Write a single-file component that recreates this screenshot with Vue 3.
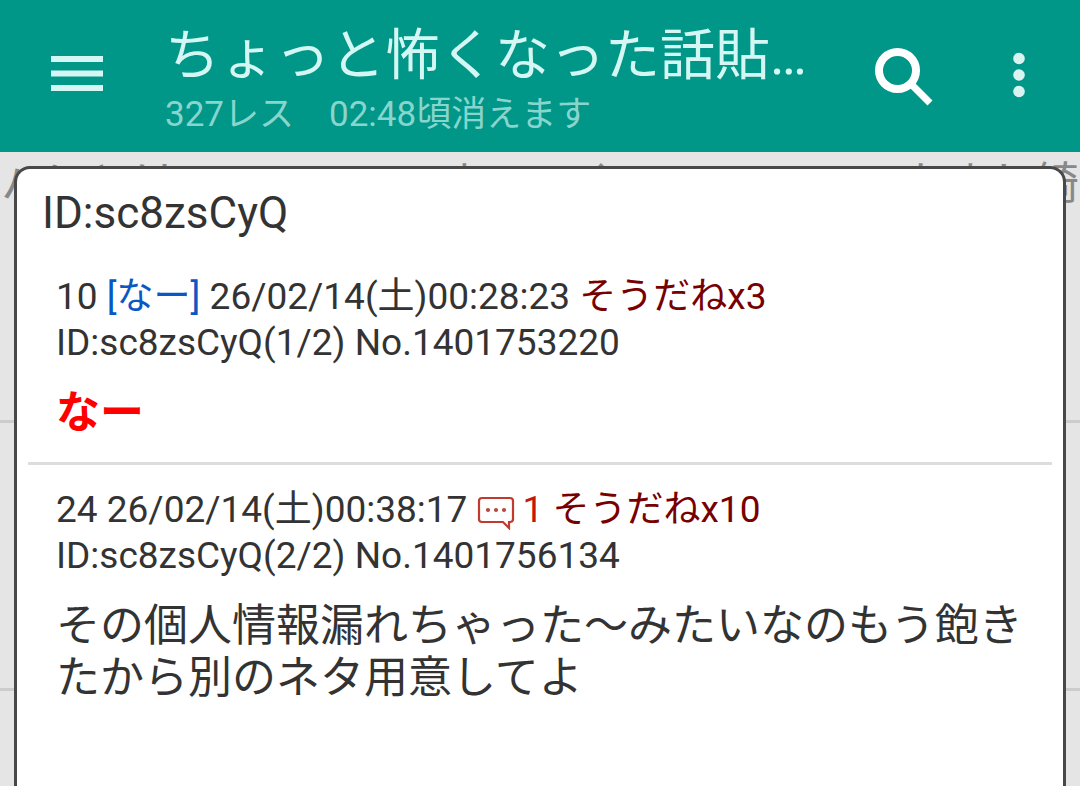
<script setup>
const posts = [
  {
    no: 10, subject: '[なー]', date: '26/02/14(土)00:28:23', replies: 0, agree: 'そうだねx3',
    info: 'ID:sc8zsCyQ(1/2) No.1401753220', body: 'なー', strong: true,
  },
  {
    no: 24, subject: '', date: '26/02/14(土)00:38:17', replies: 1, agree: 'そうだねx10',
    info: 'ID:sc8zsCyQ(2/2) No.1401756134', body: 'その個人情報漏れちゃった～みたいなのもう飽きたから別のネタ用意してよ', strong: false,
  },
]
</script>

<template>
  <div class="app">
    <header class="bar">
      <button class="icon-btn menu" type="button" aria-label="メニュー">
        <svg width="52" height="36" viewBox="0 0 52 36"><path d="M0 0h52v6H0zM0 14.500h52v6H0zM0 29h52v6H0z" fill="#d5f7f3" /></svg>
      </button>
      <div class="titles">
        <h1>ちょっと怖くなった話貼…</h1>
        <p>327レス　02:48頃消えます</p>
      </div>
      <button class="icon-btn search" type="button" aria-label="検索">
        <svg width="60" height="60" viewBox="0 0 60 60" fill="none" stroke="#fff">
          <circle cx="23.500" cy="23.500" r="18.500" stroke-width="8" />
          <path d="M36 36L56 56" stroke-width="7" />
        </svg>
      </button>
      <button class="icon-btn more" type="button" aria-label="その他">
        <svg width="12" height="46" viewBox="0 0 12 46" fill="#d9f3f0">
          <circle cx="6" cy="6.500" r="5.800" /><circle cx="6" cy="23" r="5.800" /><circle cx="6" cy="39.500" r="5.800" />
        </svg>
      </button>
    </header>

    <main class="thread">
      <div class="row first"><span>ハにとけ　　　　　　ま　　く</span><span>なまし綺</span></div>
      <div class="row"></div>
      <div class="row"></div>

      <section class="popup" aria-labelledby="popup-title">
        <h2 id="popup-title">ID:sc8zsCyQ</h2>
        <article v-for="post in posts" :key="post.no" class="post">
          <div class="meta">
            {{ post.no }}
            <a v-if="post.subject" href="#" class="subject">{{ post.subject }}</a>
            {{ post.date + ' ' }}
            <a v-if="post.replies" href="#" class="replies"><svg width="38" height="34" viewBox="0 0 38 34" fill="none" stroke="#c03a30" stroke-width="2.200">
              <path d="M5 2h28q3 0 3 3v18q0 3-3 3h-1v6l-6-6H5q-3 0-3-3V5q0-3 3-3z" />
              <g fill="#b84840" stroke="none"><circle cx="11" cy="14" r="2.100" /><circle cx="19" cy="14" r="2.100" /><circle cx="27" cy="14" r="2.100" /></g>
            </svg><span>{{ post.replies + ' ' }}</span></a>
            <a href="#" class="agree">{{ post.agree }}</a>
            <div>{{ post.info }}</div>
          </div>
          <p class="body" :class="{ strong: post.strong }">{{ post.body }}</p>
        </article>
      </section>
    </main>
  </div>
</template>

<style>
body {
  margin: 0;
  background: #e5e5e5;
}
</style>

<style scoped>
.app {
  display: flex;
  flex-direction: column;
  height: 100vh;
  overflow: hidden;
  font-family: Roboto, "Noto Sans CJK JP", sans-serif;
  color: #333;
}
h1, h2, p {
  margin: 0;
  font-weight: 400;
}
a {
  text-decoration: none;
}
.bar {
  display: flex;
  flex: none;
  align-items: center;
  height: 152px;
  background: #009688;
}
.icon-btn {
  box-sizing: border-box;
  flex: none;
  display: flex;
  align-items: center;
  justify-content: center;
  height: 148px;
  padding: 0;
  border: 0;
  background: none;
}
.menu {
  width: 154px;
  padding-bottom: 4px;
}
.search {
  width: 108px;
  padding-top: 2px;
}
.more {
  width: 122px;
  padding-bottom: 2px;
}
.titles {
  flex: 1;
  min-width: 0;
  padding: 2px 0 0 11px;
  white-space: nowrap;
}
.titles h1 {
  font-size: 55px;
  line-height: 76px;
  color: #d5f7f3;
}
.titles p {
  font-size: 35px;
  line-height: 44px;
  color: #88d5cd;
}
.thread {
  position: relative;
  flex: 1;
  background: #e5e5e5;
}
.row {
  box-sizing: border-box;
  height: 268px;
  border-bottom: 3px solid #ccc;
}
.first {
  display: flex;
  justify-content: space-between;
  height: 271px;
  padding: 6px 1px;
  overflow: hidden;
  white-space: nowrap;
  font-size: 44px;
  line-height: 52px;
  color: #888;
}
.popup {
  position: absolute;
  top: 14px;
  right: 14px;
  bottom: 0;
  left: 14px;
  padding: 16px 11px;
  overflow: hidden;
  border: 3px solid #484848;
  border-bottom: 0;
  border-radius: 16px 16px 0 0;
  background: #fff;
}
.popup h2 {
  padding: 0 14px;
  font-size: 44px;
  line-height: 56px;
}
.post {
  padding: 22px 24px 23px 28px;
}
.popup h2 + .post {
  padding-top: 33px;
}
.post + .post {
  border-top: 3px solid #ddd;
}
.meta {
  font-size: 37px;
  line-height: 46px;
}
.subject {
  color: #0b57c4;
}
.replies {
  color: #c4170c;
}
.replies svg {
  margin-right: 8px;
  vertical-align: -8px;
}
.agree {
  color: #700;
}
.body {
  padding-top: 21px;
  font-size: 44px;
  line-height: 52px;
}
.strong {
  font-weight: 700;
  color: #f00;
}
</style>
